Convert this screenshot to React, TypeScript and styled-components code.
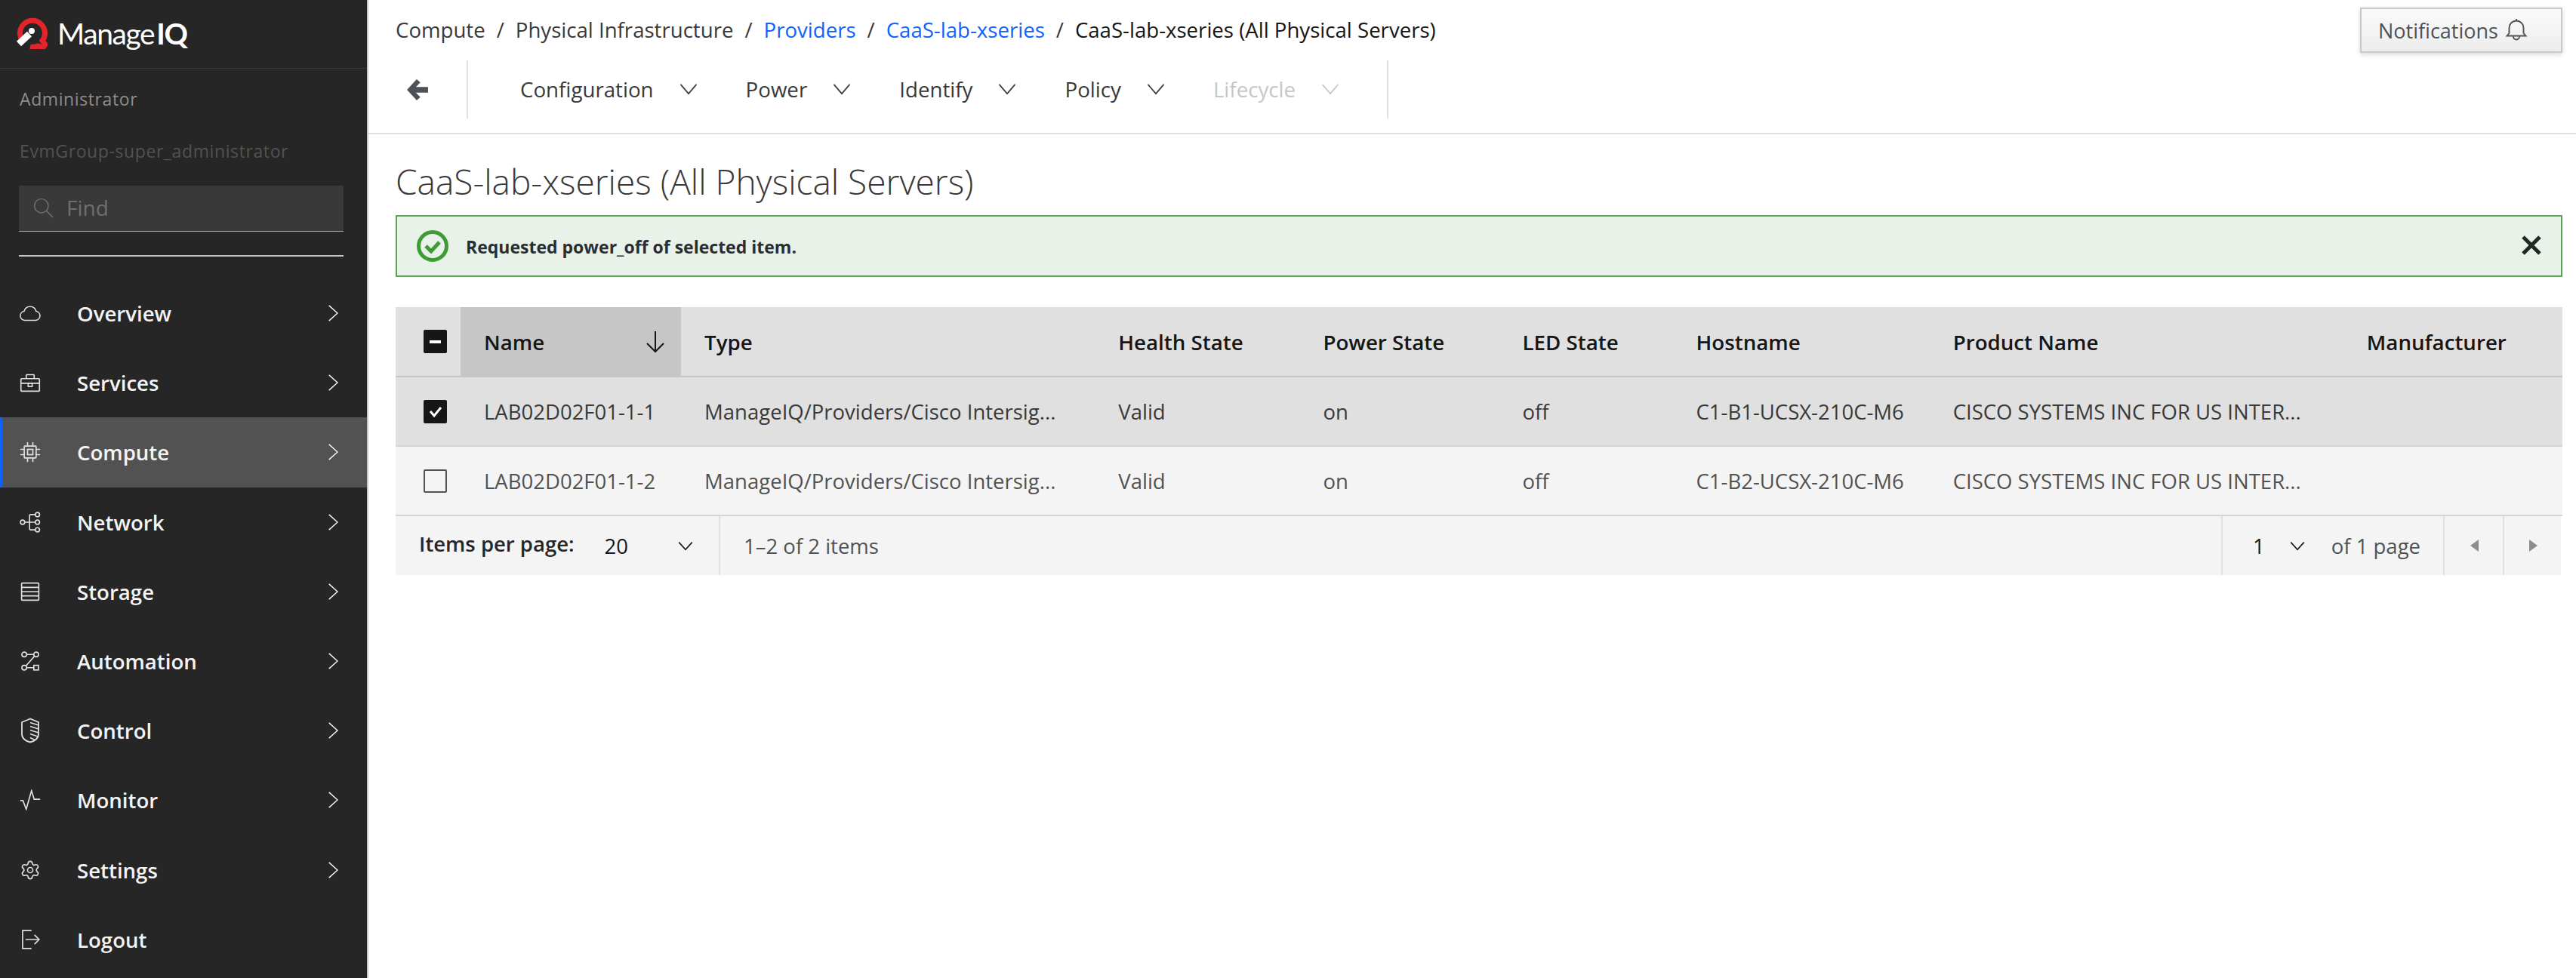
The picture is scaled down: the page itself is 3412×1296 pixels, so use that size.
import React from 'react'
import styled, { createGlobalStyle } from 'styled-components'
import { Settings } from 'lucide-react'

const GlobalStyle = createGlobalStyle`
    html, body {
        margin: 0;
        padding: 0;
        background: #fff;
    }
    * {
        box-sizing: border-box;
    }
    body {
        font-family: "Open Sans", "Liberation Sans", sans-serif;
        color: #161616;
    }
`

type IconProps = { size?: number }

const Line: React.FC<React.PropsWithChildren<IconProps & { sw?: number; view?: number }>> = ({
    size = 28,
    sw = 1.9,
    view = 32,
    children,
}) => (
    <svg
        width={size}
        height={size}
        viewBox={`0 0 ${view} ${view}`}
        fill="none"
        stroke="currentColor"
        strokeWidth={sw}
    >
        {children}
    </svg>
)

const CloudIcon = () => (
    <svg width="32" height="24" viewBox="0 0 32 24" fill="none" stroke="currentColor" strokeWidth="1.8">
        <path d="M8 22.800a6.900 6.900 0 0 1-1.200-13.700A9.400 9.400 0 0 1 25 9.100a6.900 6.900 0 0 1-1 13.700z" />
    </svg>
)
const ServicesIcon = () => (
    <Line>
        <rect x="2" y="10" width="28" height="19" rx="1" />
        <path d="M2 17h28M10 10V5a1 1 0 0 1 1-1h10a1 1 0 0 1 1 1v5" />
        <rect x="13" y="17" width="6" height="5" />
    </Line>
)
const ComputeIcon = () => (
    <Line>
        <rect x="7" y="7" width="18" height="18" rx="1" />
        <rect x="12" y="12" width="8" height="8" />
        <path d="M12 1v6M20 1v6M12 25v6M20 25v6M1 12h6M1 20h6M25 12h6M25 20h6" />
    </Line>
)
const NetworkIcon = () => (
    <Line>
        <circle cx="4.500" cy="16" r="3.200" />
        <circle cx="27" cy="4.500" r="3.200" />
        <circle cx="27" cy="16" r="3.200" />
        <circle cx="27" cy="27.500" r="3.200" />
        <path d="M8 16h15.500M15 16V6a1.500 1.500 0 0 1 1.500-1.500h7M15 16v10a1.500 1.500 0 0 0 1.500 1.500h7" />
    </Line>
)
const StorageIcon = () => (
    <Line>
        <rect x="3" y="3" width="26" height="26" rx="1" />
        <path d="M3 9.500h26M3 16h26M3 22.500h26" />
    </Line>
)
const AutomationIcon = () => (
    <Line>
        <circle cx="7" cy="6" r="3.600" />
        <circle cx="25" cy="6" r="3.600" />
        <circle cx="7" cy="26" r="3.600" />
        <rect x="21.500" y="22.500" width="7" height="7" />
        <path d="M10.500 6h11M10.500 26h11M22.500 8.500L9.500 23.500" />
    </Line>
)
const ControlIcon = () => (
    <svg width="28" height="34" viewBox="0 0 28 34" fill="none" stroke="currentColor" strokeWidth="1.8">
        <path d="M14 1.500L3 6v16c0 5 5 9.500 11 10.500 6-1 11-5.500 11-10.500V6z" />
        <path d="M14 6.500l11 3.500M14 11.500l11 3.500M14 16.500l11 3.500M14 21.500l10 3.500M14 26.500l6 3" />
    </svg>
)
const MonitorIcon = () => (
    <Line>
        <path d="M1 17h4l5 13 8-28 4 13h9" />
    </Line>
)
const LogoutIcon = () => (
    <Line>
        <path d="M18 2.500H4.500v27H18M9 16h20M22.500 9l7 7-7 7" />
    </Line>
)
const ChevronRight = () => (
    <Line size={24}>
        <path d="M9 2.500L24 16 9 29.500" />
    </Line>
)
const ChevronDown = () => (
    <Line size={28}>
        <path d="M4 9l12 14L28 9" />
    </Line>
)
const SmallChevron = () => (
    <Line size={28}>
        <path d="M6 11l10 11 10-11" />
    </Line>
)
const SearchIcon = () => (
    <Line size={28} sw={1.7}>
        <circle cx="13.500" cy="13.500" r="10.500" />
        <path d="M21 21l10 10" />
    </Line>
)
const BellIcon = () => (
    <Line size={32}>
        <path d="M3.500 23.500l3-3.500v-7a9.500 9.500 0 0 1 19 0v7l3 3.500z" />
        <path d="M16 1v2.500M12 23.500v1a4 4 0 0 0 8 0v-1" />
    </Line>
)

const navItems: { label: string; icon: React.ReactNode; active?: boolean; noArrow?: boolean }[] = [
    { label: 'Overview', icon: <CloudIcon /> },
    { label: 'Services', icon: <ServicesIcon /> },
    { label: 'Compute', icon: <ComputeIcon />, active: true },
    { label: 'Network', icon: <NetworkIcon /> },
    { label: 'Storage', icon: <StorageIcon /> },
    { label: 'Automation', icon: <AutomationIcon /> },
    { label: 'Control', icon: <ControlIcon /> },
    { label: 'Monitor', icon: <MonitorIcon /> },
    { label: 'Settings', icon: <Settings size={30} strokeWidth={1.4} /> },
    { label: 'Logout', icon: <LogoutIcon />, noArrow: true },
]

const toolbarItems = [
    { label: 'Configuration' },
    { label: 'Power' },
    { label: 'Identify' },
    { label: 'Policy' },
    { label: 'Lifecycle', disabled: true },
]

const columns = [
    { label: 'Type', width: 548 },
    { label: 'Health State', width: 271 },
    { label: 'Power State', width: 264 },
    { label: 'LED State', width: 230 },
    { label: 'Hostname', width: 340 },
    { label: 'Product Name', width: 548 },
    { label: 'Manufacturer', width: 290 },
]

const rows = [
    {
        name: 'LAB02D02F01-1-1',
        host: 'C1-B1-UCSX-210C-M6',
        selected: true,
    },
    {
        name: 'LAB02D02F01-1-2',
        host: 'C1-B2-UCSX-210C-M6',
        selected: false,
    },
]

export default function App() {
    return (
        <>
            <GlobalStyle />
            <Page>
                <Sidebar>
                    <Brand>
                        <svg width="42" height="42" viewBox="0 0 42 42">
                            <path
                                d="M9 31A16.500 16.500 0 1 1 35 31L39 36 36 40 29 38A16.500 16.500 0 0 1 19 39"
                                fill="none"
                                stroke="#e1252b"
                                strokeWidth="7"
                            />
                            <path d="M4 35L18 22" stroke="#fff" strokeWidth="9" />
                            <circle cx="21" cy="18" r="4" fill="#fff" />
                        </svg>
                        <BrandName>
                            Manage<b>IQ</b>
                        </BrandName>
                    </Brand>
                    <UserName>Administrator</UserName>
                    <GroupName>EvmGroup-super_administrator</GroupName>
                    <FindBox>
                        <SearchIcon />
                        <span>Find</span>
                    </FindBox>
                    <SideRule />
                    <Nav>
                        {navItems.map((item) => (
                            <NavRow key={item.label} $active={item.active}>
                                <NavIcon>{item.icon}</NavIcon>
                                <NavLabel>{item.label}</NavLabel>
                                {item.noArrow ? null : <ChevronRight />}
                            </NavRow>
                        ))}
                    </Nav>
                </Sidebar>
                <Main>
                    <Header>
                        <TopRow>
                            <Breadcrumb>
                                <span>Compute</span>
                                <Slash>/</Slash>
                                <span>Physical Infrastructure</span>
                                <Slash>/</Slash>
                                <Crumb>Providers</Crumb>
                                <Slash>/</Slash>
                                <Crumb>CaaS-lab-xseries</Crumb>
                                <Slash>/</Slash>
                                <Current>CaaS-lab-xseries (All Physical Servers)</Current>
                            </Breadcrumb>
                            <NotifyButton>
                                Notifications
                                <BellIcon />
                            </NotifyButton>
                        </TopRow>
                        <Toolbar>
                            <BackButton>
                                <svg width="30" height="30" viewBox="0 0 28 28" fill="#4d5258">
                                    <path d="M13 1l4.500 4L12 10.500h15v7H12L17.500 23 13 27 1 14z" />
                                </svg>
                            </BackButton>
                            {toolbarItems.map((item) => (
                                <ToolButton key={item.label} $disabled={item.disabled}>
                                    {item.label}
                                    <ChevronDown />
                                </ToolButton>
                            ))}
                            <ToolEnd />
                        </Toolbar>
                    </Header>
                    <Content>
                        <Title>CaaS-lab-xseries (All Physical Servers)</Title>
                        <Alert>
                            <svg width="42" height="42" viewBox="0 0 42 42" fill="none">
                                <circle cx="21" cy="21" r="18.500" stroke="#3f9c35" strokeWidth="5" />
                                <path d="M12 21l7 7 11-12" stroke="#3f9c35" strokeWidth="5" />
                            </svg>
                            <AlertText>Requested power_off of selected item.</AlertText>
                            <CloseMark>
                                <svg width="26" height="26" viewBox="0 0 26 26" stroke="#1f2a24" strokeWidth="5">
                                    <path d="M2 2l22 22M24 2L2 24" />
                                </svg>
                            </CloseMark>
                        </Alert>
                        <Table>
                            <thead>
                                <tr>
                                    <HeadCell $width={86}>
                                        <CheckBox $checked>
                                            <MinusMark />
                                        </CheckBox>
                                    </HeadCell>
                                    <HeadCell $width={292} $sorted>
                                        <SortInner>
                                            Name
                                            <svg width="28" height="30" viewBox="0 0 28 30" fill="none" stroke="#161616" strokeWidth="2">
                                                <path d="M14 1v27M3 17l11 11 11-11" />
                                            </svg>
                                        </SortInner>
                                    </HeadCell>
                                    {columns.map((col) => (
                                        <HeadCell key={col.label} $width={col.width}>
                                            {col.label}
                                        </HeadCell>
                                    ))}
                                </tr>
                            </thead>
                            <tbody>
                                {rows.map((row) => (
                                    <BodyRow key={row.name} $selected={row.selected}>
                                        <td>
                                            <CheckBox $checked={row.selected}>
                                                {row.selected ? (
                                                    <svg width="20" height="20" viewBox="0 0 20 20" fill="none" stroke="#fff" strokeWidth="3">
                                                        <path d="M3 10l5 6 9-11" />
                                                    </svg>
                                                ) : null}
                                            </CheckBox>
                                        </td>
                                        <td>{row.name}</td>
                                        <td>ManageIQ/Providers/Cisco Intersig...</td>
                                        <td>Valid</td>
                                        <td>on</td>
                                        <td>off</td>
                                        <td>{row.host}</td>
                                        <td>CISCO SYSTEMS INC FOR US INTER...</td>
                                        <td></td>
                                    </BodyRow>
                                ))}
                            </tbody>
                        </Table>
                        <Pagination>
                            <PerPage>
                                <PerPageLabel>Items per page:</PerPageLabel>
                                <Value>20</Value>
                                <SmallChevron />
                            </PerPage>
                            <Range>1–2 of 2 items</Range>
                            <PageSelect>
                                <Value>1</Value>
                                <SmallChevron />
                                <Range>of 1 page</Range>
                            </PageSelect>
                            <PageArrow>
                                <svg width="14" height="20" viewBox="0 0 14 20" fill="#8d8d8d">
                                    <path d="M13 2v16L2 10z" />
                                </svg>
                            </PageArrow>
                            <PageArrow>
                                <svg width="14" height="20" viewBox="0 0 14 20" fill="#8d8d8d">
                                    <path d="M2 2v16l11-8z" />
                                </svg>
                            </PageArrow>
                        </Pagination>
                    </Content>
                </Main>
            </Page>
        </>
    )
}

const Page = styled.div`
    display: flex;
    width: 3412px;
    height: 1296px;
    overflow: hidden;
`
const Sidebar = styled.aside`
    display: flex;
    flex-direction: column;
    flex: 0 0 488px;
    height: 100%;
    background: #262626;
    border-right: 2px solid #c6c6c6;
`
const Brand = styled.div`
    display: flex;
    align-items: center;
    gap: 13px;
    height: 91px;
    padding: 0 0 3px 21px;
    border-bottom: 1px solid #393939;
`
const BrandName = styled.div`
    font-family: Lato, "Open Sans", sans-serif;
    font-size: 39px;
    letter-spacing: -1.4px;
    color: #fff;
    b {
        font-weight: 700;
        margin-left: 3px;
    }
`
const UserName = styled.div`
    margin-top: 24px;
    padding-left: 26px;
    font-size: 23px;
    line-height: 32px;
    letter-spacing: 0.6px;
    color: #8d8d8d;
`
const GroupName = styled.div`
    margin-top: 37px;
    padding-left: 26px;
    font-size: 23px;
    line-height: 32px;
    letter-spacing: 0.6px;
    color: #525252;
`
const FindBox = styled.div`
    display: flex;
    align-items: center;
    gap: 17px;
    height: 61px;
    margin: 30px 31px 0 25px;
    padding: 0 0 2px 18px;
    background: #393939;
    border-bottom: 1px solid #a8a8a8;
    font-size: 28px;
    color: #6f6f6f;
`
const SideRule = styled.div`
    height: 2px;
    margin: 31px 31px 0 25px;
    background: #c6c6c6;
`
const Nav = styled.nav`
    display: flex;
    flex-direction: column;
    margin-top: 29px;
`
const NavRow = styled.div<{ $active?: boolean }>`
    display: flex;
    align-items: center;
    height: 92.2px;
    padding: 0 33px 0 26px;
    color: #f4f4f4;
    background: ${(p) => (p.$active ? '#525252' : 'transparent')};
    box-shadow: ${(p) => (p.$active ? 'inset 3px 0 0 #0f62fe' : 'none')};
`
const NavIcon = styled.div`
    display: flex;
    justify-content: center;
    flex: 0 0 28px;
    width: 28px;
    margin-right: 48px;
    color: #e0e0e0;
`
const NavLabel = styled.div`
    flex: 1;
    font-size: 27.6px;
    font-weight: 600;
`
const Main = styled.main`
    display: flex;
    flex-direction: column;
    flex: 1;
    min-width: 0;
`
const Header = styled.header`
    height: 178px;
    padding: 10px 18px 0 36px;
    border-bottom: 2px solid #e0e0e0;
`
const TopRow = styled.div`
    display: flex;
    align-items: flex-start;
    justify-content: space-between;
    height: 70px;
`
const Breadcrumb = styled.div`
    display: flex;
    align-items: center;
    height: 58px;
    font-size: 27.6px;
    color: #393939;
`
const Slash = styled.span`
    margin: 0 15px;
`
const Crumb = styled.span`
    color: #0f62fe;
`
const Current = styled.span`
    color: #161616;
`
const NotifyButton = styled.button`
    display: flex;
    align-items: center;
    gap: 8px;
    width: 268px;
    height: 60px;
    padding: 0 0 0 22px;
    background: linear-gradient(#fafafa, #ededed);
    border: 2px solid #c9c9c9;
    box-shadow: 0 2px 6px rgba(0, 0, 0, 0.16);
    font-family: inherit;
    font-size: 27px;
    color: #4d5258;
`
const Toolbar = styled.div`
    display: flex;
    align-items: center;
    height: 77px;
`
const BackButton = styled.div`
    display: flex;
    align-items: center;
    justify-content: center;
    width: 96px;
    height: 100%;
    padding-right: 36px;
    border-right: 2px solid #e0e0e0;
    margin-right: 38px;
`
const ToolButton = styled.div<{ $disabled?: boolean }>`
    display: flex;
    align-items: center;
    gap: 32px;
    height: 100%;
    padding: 0 31px 2px;
    font-size: 27.7px;
    color: ${(p) => (p.$disabled ? '#c6c6c6' : '#393939')};
`
const ToolEnd = styled.div`
    width: 2px;
    height: 100%;
    margin-left: 30px;
    background: #e0e0e0;
`
const Content = styled.div`
    display: flex;
    flex-direction: column;
    padding: 0 18px 0 36px;
`
const Title = styled.h1`
    margin: 32px 0 0;
    height: 75px;
    font-size: 46px;
    line-height: 60px;
    font-weight: 300;
    color: #393939;
`
const Alert = styled.div`
    display: flex;
    align-items: center;
    height: 82px;
    padding: 0 26px;
    background: #e8f2e8;
    border: 2px solid #5ba352;
`
const AlertText = styled.div`
    flex: 1;
    margin: 1px 0 0 23px;
    font-size: 23px;
    font-weight: 700;
    color: #292e34;
`
const CloseMark = styled.div`
    display: flex;
    margin-bottom: 3px;
`
const Table = styled.table`
    width: 100%;
    margin-top: 40px;
    table-layout: fixed;
    border-collapse: collapse;
    td {
        height: 92px;
        padding: 0 0 0 31px;
        border-bottom: 2px solid #d4d4d4;
        font-size: 27.5px;
        white-space: nowrap;
        overflow: hidden;
    }
    td:first-child {
        padding-left: 37px;
    }
`
const HeadCell = styled.th<{ $width: number; $sorted?: boolean }>`
    width: ${(p) => p.$width}px;
    height: 92px;
    padding: 0 0 0 31px;
    text-align: left;
    font-size: 27.7px;
    font-weight: 600;
    background: ${(p) => (p.$sorted ? '#c6c6c6' : '#e0e0e0')};
    border-bottom: 2px solid #c6c6c6;
    &:first-child {
        padding-left: 37px;
    }
`
const SortInner = styled.div`
    display: flex;
    align-items: center;
    justify-content: space-between;
    padding-right: 20px;
`
const BodyRow = styled.tr<{ $selected?: boolean }>`
    background: ${(p) => (p.$selected ? '#e0e0e0' : '#f4f4f4')};
    color: ${(p) => (p.$selected ? '#393939' : '#525252')};
`
const CheckBox = styled.div<{ $checked?: boolean }>`
    display: flex;
    align-items: center;
    justify-content: center;
    width: 31px;
    height: 31px;
    border-radius: 2px;
    background: ${(p) => (p.$checked ? '#161616' : 'transparent')};
    border: 2px solid ${(p) => (p.$checked ? '#161616' : '#525252')};
`
const MinusMark = styled.div`
    width: 15px;
    height: 4px;
    background: #fff;
`
const Pagination = styled.div`
    display: flex;
    align-items: stretch;
    height: 78px;
    margin-right: 2px;
    background: #f4f4f4;
    font-size: 27.5px;
`
const PerPage = styled.div`
    display: flex;
    align-items: center;
    width: 430px;
    padding-left: 31px;
    border-right: 2px solid #e0e0e0;
    svg {
        margin-left: 62px;
    }
`
const PerPageLabel = styled.span`
    margin-top: -6px;
    font-weight: 600;
    color: #262626;
`
const Value = styled.span`
    margin-left: 40px;
    color: #161616;
`
const Range = styled.div`
    display: flex;
    align-items: center;
    flex: 1;
    padding-left: 31px;
    color: #525252;
    white-space: nowrap;
`
const PageSelect = styled.div`
    display: flex;
    align-items: center;
    width: 296px;
    border-left: 2px solid #e0e0e0;
    border-right: 2px solid #e0e0e0;
    svg {
        margin-left: 29px;
    }
    ${Range} {
        padding-left: 31px;
        flex: none;
    }
`
const PageArrow = styled.div`
    display: flex;
    align-items: center;
    justify-content: center;
    width: 77px;
    & + & {
        border-left: 2px solid #e0e0e0;
    }
`
